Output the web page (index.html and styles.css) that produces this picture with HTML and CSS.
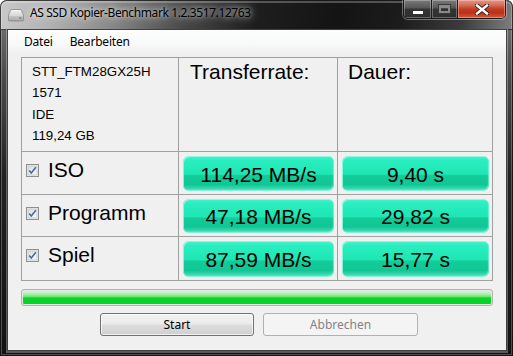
FILE: index.html
```html
<!DOCTYPE html>
<html>
<head>
<meta charset="utf-8">
<link rel="stylesheet" href="styles.css">
</head>
<body>
<div class="window">
  <div class="titlebar">
    <svg class="appicon" width="16" height="14" viewBox="0 0 16 14">
      <defs>
        <linearGradient id="ig" x1="0" y1="0" x2="0" y2="1">
          <stop offset="0" stop-color="#f4f4f4"/>
          <stop offset="0.55" stop-color="#d6d6d6"/>
          <stop offset="1" stop-color="#9a9a9a"/>
        </linearGradient>
      </defs>
      <path d="M3 1.5 H13 L15.5 7 V12 Q15.5 13 14.5 13 H1.5 Q0.5 13 0.5 12 V7 Z" fill="url(#ig)" stroke="#8a8a8a" stroke-width="0.8"/>
      <rect x="1.5" y="8.5" width="13" height="3" fill="#b9b9b9"/>
      <rect x="11" y="9.3" width="2.5" height="1.3" fill="#7c7c7c"/>
    </svg>
    <span class="title">AS SSD Kopier-Benchmark 1.2.3517.12763</span>
    <div class="caption">
      <div class="cbtn cmin"><span class="minbar"></span></div>
      <div class="cbtn cmax"><span class="maxbox"></span></div>
      <div class="cbtn cclose">
        <svg width="14" height="11" viewBox="0 0 14 11">
          <path d="M2 1.5 L12 9.5 M12 1.5 L2 9.5" stroke="#3a1a14" stroke-width="4.2" stroke-linecap="square"/>
          <path d="M2 1.5 L12 9.5 M12 1.5 L2 9.5" stroke="#ffffff" stroke-width="2.4" stroke-linecap="square"/>
        </svg>
      </div>
    </div>
  </div>
  <div class="client">
    <div class="menubar">
      <span class="menuitem">Datei</span>
      <span class="menuitem">Bearbeiten</span>
    </div>
    <div class="content">
      <div class="grid">
        <div class="cell info">
          <div>STT_FTM28GX25H</div>
          <div>1571</div>
          <div>IDE</div>
          <div>119,24 GB</div>
        </div>
        <div class="cell head">Transferrate:</div>
        <div class="cell head head3">Dauer:</div>

        <div class="cell label">
          <svg class="check" width="13" height="13" viewBox="0 0 13 13"><defs><linearGradient id="cbg" x1="0" y1="0" x2="1" y2="1"><stop offset="0" stop-color="#dcdcdc"/><stop offset="1" stop-color="#fbfbfb"/></linearGradient></defs><rect x="0.5" y="0.5" width="12" height="12" fill="#f4f4f4" stroke="#8e8f8f"/><rect x="2" y="2" width="9" height="9" fill="url(#cbg)" stroke="#c9cbcd" stroke-width="1"/><path d="M3.2 6.4 L5.3 9 L9.8 3.2" fill="none" stroke="#4a6aa6" stroke-width="1.6"/></svg>
          <span>ISO</span>
        </div>
        <div class="cell val"><div class="gbox">114,25 MB/s</div></div>
        <div class="cell val val3"><div class="gbox">9,40 s</div></div>

        <div class="cell label">
          <svg class="check" width="13" height="13" viewBox="0 0 13 13"><rect x="0.5" y="0.5" width="12" height="12" fill="#f4f4f4" stroke="#8e8f8f"/><rect x="2" y="2" width="9" height="9" fill="url(#cbg)" stroke="#c9cbcd" stroke-width="1"/><path d="M3.2 6.4 L5.3 9 L9.8 3.2" fill="none" stroke="#4a6aa6" stroke-width="1.6"/></svg>
          <span>Programm</span>
        </div>
        <div class="cell val"><div class="gbox">47,18 MB/s</div></div>
        <div class="cell val val3"><div class="gbox">29,82 s</div></div>

        <div class="cell label">
          <svg class="check" width="13" height="13" viewBox="0 0 13 13"><rect x="0.5" y="0.5" width="12" height="12" fill="#f4f4f4" stroke="#8e8f8f"/><rect x="2" y="2" width="9" height="9" fill="url(#cbg)" stroke="#c9cbcd" stroke-width="1"/><path d="M3.2 6.4 L5.3 9 L9.8 3.2" fill="none" stroke="#4a6aa6" stroke-width="1.6"/></svg>
          <span>Spiel</span>
        </div>
        <div class="cell val"><div class="gbox">87,59 MB/s</div></div>
        <div class="cell val val3"><div class="gbox">15,77 s</div></div>
      </div>
      <div class="progress"><div class="fill"></div></div>
      <div class="buttons">
        <div class="btn">Start</div>
        <div class="btn disabled">Abbrechen</div>
      </div>
    </div>
  </div>
</div>
</body>
</html>
```
FILE: styles.css
```css
* { box-sizing: border-box; margin: 0; padding: 0; }
html, body { width: 513px; height: 356px; overflow: hidden; background: #ffffff; }

.window {
  width: 513px;
  height: 356px;
  display: flex;
  flex-direction: column;
  border-radius: 7px 7px 0 0;
  overflow: hidden;
  background: linear-gradient(to bottom, #7c7c7c 0%, #4a4a4a 22%, #222 50%, #121212 100%);
  box-shadow: inset 0 0 0 1px rgba(0,0,0,0.75), inset 0 0 0 2px rgba(255,255,255,0.25);
}

.titlebar {
  height: 30px;
  flex: none;
  display: flex;
  align-items: flex-start;
  background:
    linear-gradient(100deg, #c9c9c9 0%, #b3b3b3 10%, #8a8a8a 22%, #4a4a4a 36%, #1e1e1e 50%, #141414 66%, #1c1c1c 78%, #3c3c3c 90%, #808080 100%);
  border-radius: 7px 7px 0 0;
  box-shadow: inset 0 0 0 1px rgba(0,0,0,0.7), inset 0 1px 0 2px rgba(255,255,255,0.25);
}

.appicon { margin: 8px 0 0 8px; flex: none; }

.title {
  margin: 5px 0 0 6px;
  font-family: "Noto Sans", "Open Sans", sans-serif;
  font-size: 12px;
  line-height: 16px;
  color: #000;
  letter-spacing: -0.4px;
  text-shadow: 0 0 8px rgba(255,255,255,0.85), 0 0 4px rgba(255,255,255,0.6);
}

.caption {
  margin-left: auto;
  margin-right: 7px;
  display: flex;
  height: 19px;
  border: 1px solid rgba(20,20,20,0.9);
  border-top: none;
  border-radius: 0 0 5px 5px;
  overflow: hidden;
  box-shadow: 0 0 0 1px rgba(255,255,255,0.35);
}

.cbtn {
  height: 18px;
  display: flex;
  align-items: center;
  justify-content: center;
}
.cmin, .cmax {
  background: linear-gradient(to bottom, #7a7a7a 0%, #555 45%, #333 50%, #2e2e2e 100%);
  box-shadow: inset 0 0 0 1px rgba(255,255,255,0.28);
}
.cmin { width: 28px; border-right: 1px solid #1c1c1c; }
.cmax { width: 26px; border-right: 1px solid #1c1c1c; }
.minbar {
  width: 10px; height: 3px; margin-top: 6px;
  background: #fff; box-shadow: 0 0 0 1px #333;
}
.maxbox {
  width: 11px; height: 8px;
  border: 2px solid #8a8a8a; border-top-width: 3px;
  box-shadow: 0 0 0 1px #3a3a3a;
}
.cclose {
  width: 47px;
  background: linear-gradient(to bottom, #e49a8a 0%, #d26a55 30%, #c43d24 50%, #bb2f18 70%, #d7583a 100%);
  box-shadow: inset 0 0 0 1px rgba(255,200,190,0.45);
}

.client {
  flex: 1;
  margin: 0 7px 6px 8px;
  background: #f0f0f0;
  display: flex;
  flex-direction: column;
  box-shadow: 0 0 0 1px rgba(60,60,60,0.9), 0 1px 0 2px rgba(255,255,255,0.3);
}

.menubar {
  height: 23px;
  flex: none;
  display: flex;
  align-items: center;
  gap: 17px;
  padding-left: 16px;
  background: linear-gradient(to bottom, #fdfdfd 0%, #f8f9fa 60%, #f1f1f1 100%);
  font-family: "Noto Sans", "Open Sans", sans-serif;
  font-size: 12px;
  letter-spacing: -0.2px;
  color: #000;
}
.menuitem { line-height: 23px; }

.content {
  flex: 1;
  padding: 4px 13px 0 13px;
  display: flex;
  flex-direction: column;
}

.grid {
  display: grid;
  grid-template-columns: 156px 158px 154px;
  grid-template-rows: 93px 42px 41px 43px;
  gap: 1px;
  background: #a0a0a0;
  border: 1px solid #a0a0a0;
  width: 472px;
  font-family: "Liberation Sans", Arial, sans-serif;
  color: #000;
}
.cell { background: #f0f0f0; }

.info {
  padding: 3px 0 0 10px;
  font-size: 13.33px;
  line-height: 21.4px;
}
.head {
  padding: 2px 0 0 11px;
  font-size: 21px;
  line-height: 24px;
}
.head3 { padding-left: 10px; }

.label {
  display: flex;
  align-items: flex-start;
  padding: 6px 0 0 4px;
  font-size: 21px;
  line-height: 24px;
}
.check { margin: 6px 9px 0 0; flex: none; }

.val { padding: 4px 3px 3px 4px; display: flex; }
.gbox {
  flex: 1;
  display: flex;
  align-items: center;
  justify-content: center;
  border-radius: 6px;
  font-size: 21px;
  padding-top: 2px;
  background: linear-gradient(to bottom, #48f4cc 0%, #2aeec0 12%, #1fe6b4 52%, #13cc9a 56%, #10c695 82%, #3ad8b0 93%, #7ae9cf 100%);
  box-shadow: inset 1px 1px 0 rgba(160,250,225,0.8), inset -1px -1px 1px rgba(160,250,225,0.6);
}

.progress {
  margin-top: 8px;
  height: 17px;
  width: 472px;
  border: 1px solid #b2b2b2;
  border-radius: 3px;
  background: #e6e6e6;
  padding: 1px;
}
.fill {
  height: 100%;
  border-radius: 1px;
  background: linear-gradient(to bottom, #d4f7d4 0%, #a8eea8 25%, #6be46b 45%, #0bd62a 52%, #02d427 100%);
}

.buttons {
  margin-top: 7px;
  display: flex;
  gap: 9px;
  padding-left: 79px;
}
.btn {
  width: 154px;
  height: 23px;
  border: 1px solid #707070;
  border-radius: 3px;
  background: linear-gradient(to bottom, #f2f2f2 0%, #ebebeb 48%, #dddddd 52%, #cfcfcf 100%);
  box-shadow: inset 0 0 0 1px rgba(255,255,255,0.7);
  font-family: "Noto Sans", "Open Sans", sans-serif;
  font-size: 12px;
  line-height: 21px;
  text-align: center;
  color: #000;
}
.btn.disabled {
  width: 155px;
  border-color: #adb2b5;
  background: #f4f4f4;
  box-shadow: none;
  color: #838383;
}
```
